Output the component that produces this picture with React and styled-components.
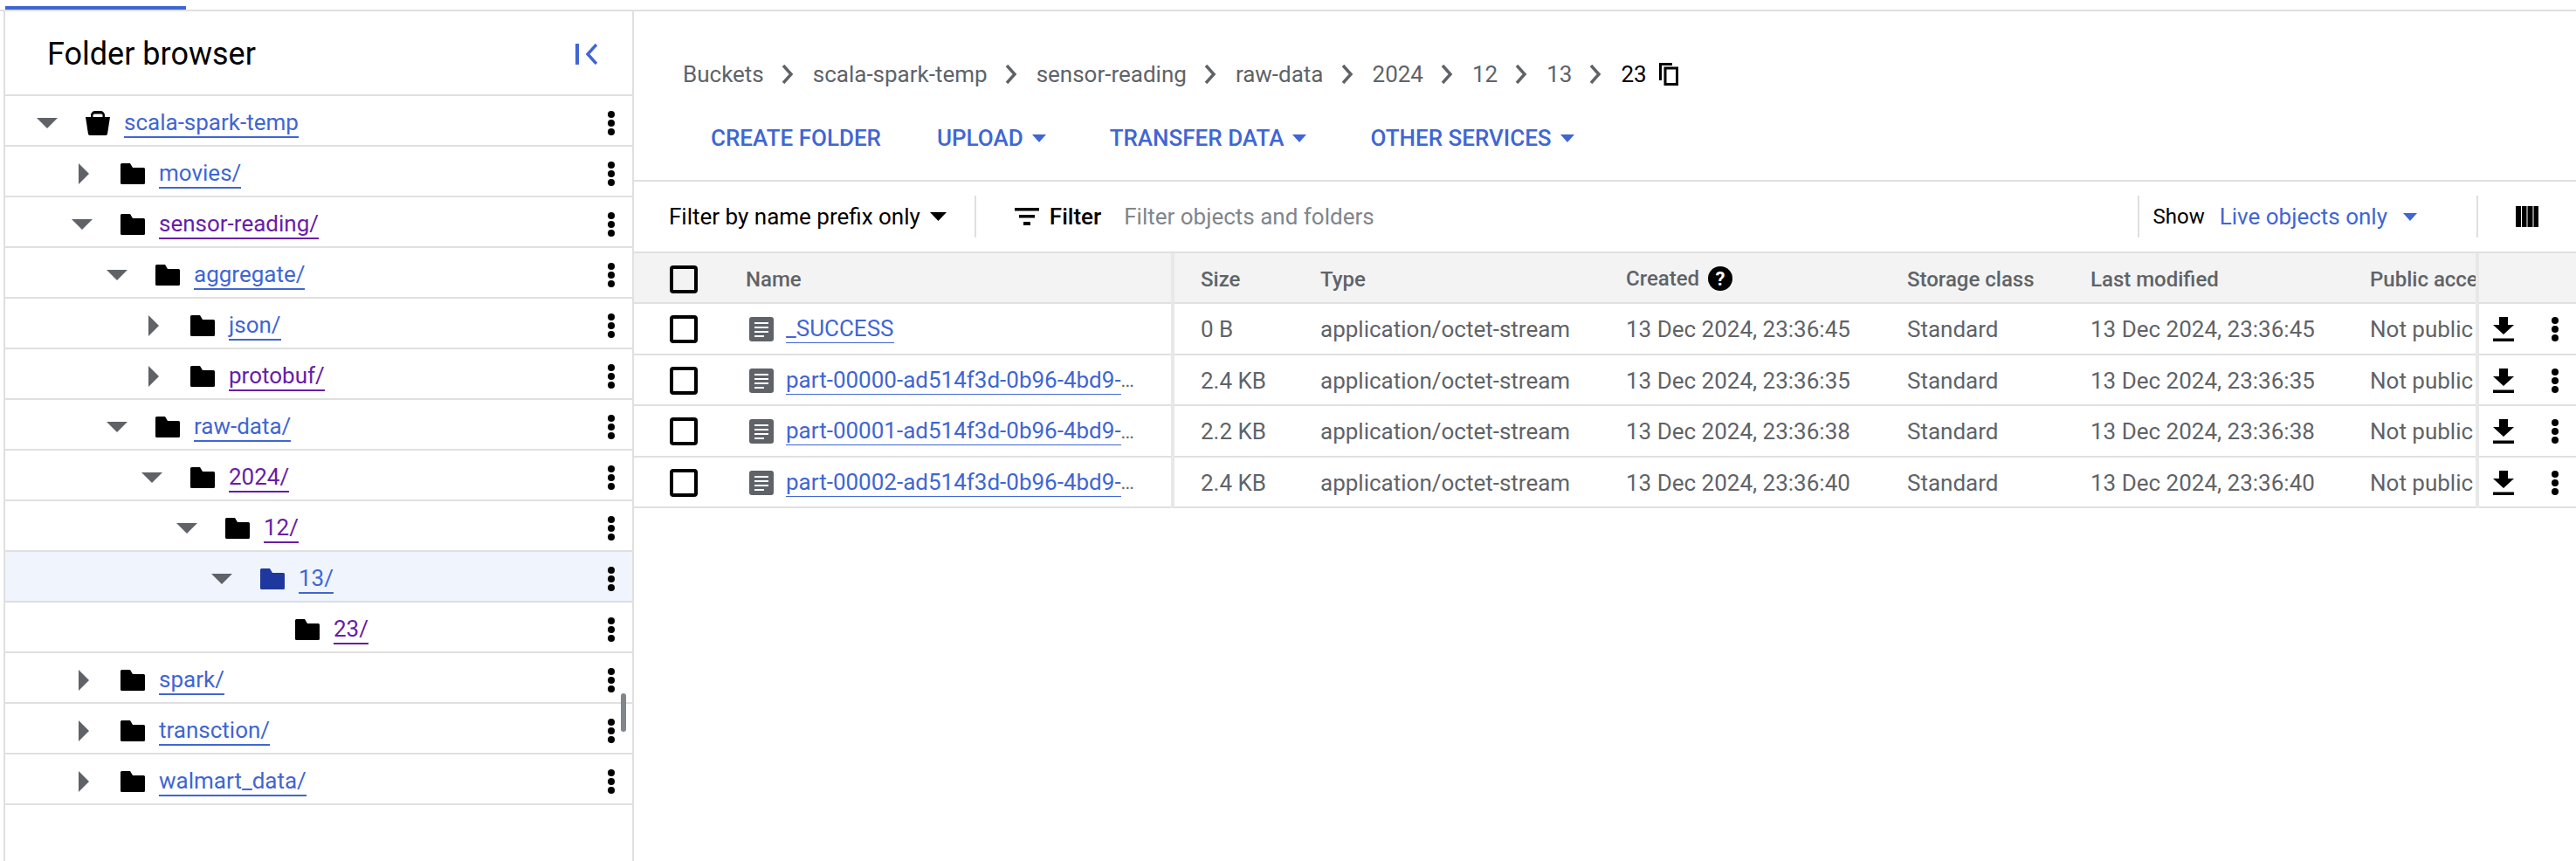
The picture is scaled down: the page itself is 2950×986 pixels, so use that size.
import React from 'react';
import styled, { createGlobalStyle } from 'styled-components';

const blue = '#3f66d4';
const purple = '#681da8';
const grey = '#5f6368';
const line = '#e0e0e0';
const tableColumns = '128px 487px 171px 350px 322px 210px 320px 121px 115px';

const GlobalStyle = createGlobalStyle`
  html, body { margin: 0; padding: 0; background: #fff; }
  body { font-family: Roboto, "Liberation Sans", sans-serif; color: #000; overflow: hidden; }
`;

const Page = styled.div`
  width: 2950px;
  height: 986px;
  display: flex;
  flex-direction: column;
  overflow: hidden;
`;

const TopBar = styled.div`
  height: 11px;
  padding: 7px 0 0 6px;
  box-sizing: border-box;
`;
const Progress = styled.div`
  width: 207px;
  height: 4px;
  background: ${blue};
`;
const TopLine = styled.div`
  height: 2px;
  background: ${line};
`;

const Main = styled.div`
  flex: 1;
  display: flex;
  min-height: 0;
`;

/* sidebar */
const Sidebar = styled.aside`
  position: relative;
  width: 718px;
  margin-left: 4px;
  border-left: 2px solid ${line};
  border-right: 2px solid ${line};
  flex: none;
`;
const SidebarHead = styled.div`
  height: 93px;
  display: flex;
  align-items: center;
  justify-content: space-between;
  padding: 2px 40px 0 48px;
  border-bottom: 2px solid ${line};
`;
const SidebarTitle = styled.h2`
  margin: 0;
  font-size: 36px;
  font-weight: 400;
  color: #000;
`;
const TreeRow = styled.div`
  height: 50px;
  display: flex;
  align-items: center;
  padding: 6px 20px 0 ${p => 30 + p.$level * 40}px;
  border-bottom: 2px solid ${p => (p.$selected ? '#d8dfe8' : line)};
  background: ${p => (p.$selected ? '#f0f4fd' : '#fff')};
`;
const CaretSlot = styled.span`
  width: 62px;
  height: 24px;
  flex: none;
  display: flex;
  align-items: center;
  padding-left: ${p => (p.$open ? '6px' : '14px')};
  box-sizing: border-box;
`;
const TreeLink = styled.a`
  margin-left: 16px;
  font-size: 26px;
  line-height: 31px;
  color: ${p => (p.$visited ? purple : blue)};
  border-bottom: 2px solid currentColor;
`;
const RowEnd = styled.span`
  margin-left: auto;
  display: flex;
`;
const ScrollThumb = styled.div`
  position: absolute;
  left: 705px;
  top: 781px;
  width: 6px;
  height: 44px;
  border-radius: 3px;
  background: #80868b;
`;

/* right pane */
const Content = styled.main`
  flex: 1;
  min-width: 0;
`;
const Breadcrumbs = styled.nav`
  height: 38px;
  margin-top: 53px;
  padding-left: 56px;
  display: flex;
  align-items: center;
  font-size: 26px;
  color: ${grey};
`;
const Crumb = styled.span`
  color: ${p => (p.$current ? '#000' : grey)};
`;
const CrumbChevron = styled.svg`
  width: 14px;
  height: 22px;
  margin: 0 22px 0 20px;
  flex: none;
`;
const CopyIcon = styled.svg`
  width: 22px;
  height: 26px;
  margin-left: 14px;
`;
const Actions = styled.div`
  height: 96px;
  padding: 6px 0 0 88px;
  display: flex;
  align-items: center;
  border-bottom: 2px solid ${line};
`;
const ActionButton = styled.button`
  display: flex;
  align-items: center;
  gap: 10px;
  padding: 0;
  border: 0;
  background: none;
  font: 500 26px Roboto, sans-serif;
  color: ${blue};
  margin-right: ${p => p.$after}px;
`;
const SmallArrow = styled.svg`
  width: 16px;
  height: 9px;
`;
const FilterBar = styled.div`
  height: 80px;
  display: flex;
  align-items: center;
  padding: 0 43px 0 40px;
  border-bottom: 2px solid ${line};
  font-size: 26px;
`;
const FilterMode = styled.span`
  color: #000;
`;
const Divider = styled.span`
  width: 2px;
  height: 48px;
  background: ${line};
  margin: ${p => p.$margin};
  flex: none;
`;
const FilterLabel = styled.span`
  font-weight: 500;
  color: #000;
  margin: 0 26px 0 12px;
`;
const Placeholder = styled.span`
  color: #80868b;
`;
const ShowLabel = styled.span`
  color: #000;
  font-size: 24px;
  margin-right: 17px;
`;
const ShowValue = styled.span`
  color: ${blue};
  margin-right: 18px;
`;

/* table */
const TableRow = styled.div`
  display: grid;
  grid-template-columns: ${tableColumns};
  height: ${p => (p.$head ? '56px' : '56.5px')};
  border-bottom: 2px solid ${line};
  background: ${p => (p.$head ? '#f3f3f3' : '#fff')};
  font-size: ${p => (p.$head ? '24px' : '26px')};
  font-weight: ${p => (p.$head ? 500 : 400)};
  color: ${grey};
`;
const Cell = styled.div`
  margin-bottom: -2px;
  display: flex;
  align-items: center;
  box-sizing: border-box;
  white-space: nowrap;
  overflow: hidden;
  padding-left: ${p => p.$pad || 0}px;
  padding-top: ${p => (p.$nudge ? '2px' : '0')};
  border-left: ${p => (p.$sticky ? '4px solid #e8e8e8' : '0')};
`;
const Checkbox = styled.span`
  width: 32px;
  height: 32px;
  box-sizing: border-box;
  border: 4px solid #000;
  border-radius: 4px;
`;
const FileLink = styled.a`
  margin-left: 14px;
  font-size: 26px;
  line-height: 31px;
  color: ${blue};
  border-bottom: 1px solid currentColor;
`;
const Ellipsis = styled.span`
  color: ${grey};
  font-size: 22px;
  letter-spacing: -1px;
`;
const HelpBadge = styled.span`
  width: 28px;
  height: 28px;
  margin-left: 10px;
  border-radius: 50%;
  background: #000;
  color: #fff;
  font-size: 22px;
  font-weight: 700;
  display: flex;
  align-items: center;
  justify-content: center;
`;
const ActionCell = styled(Cell)`
  gap: 43px;
`;

const CaretDown = () => (
  <svg width="24" height="12" viewBox="0 0 24 12"><path d="M0 0h24L12 12z" fill={grey} /></svg>
);
const CaretRight = () => (
  <svg width="12" height="24" viewBox="0 0 12 24"><path d="M0 0l12 12L0 24z" fill={grey} /></svg>
);
const Folder = ({ color = '#000' }) => (
  <svg width="28" height="24" viewBox="0 0 28 24" style={{ flex: 'none' }}>
    <path d="M1.500 0H11l3 5h12.500A1.500 1.500 0 0 1 28 6.500V22.500A1.500 1.500 0 0 1 26.500 24H1.500A1.500 1.500 0 0 1 0 22.500V1.500A1.500 1.500 0 0 1 1.500 0z" fill={color} />
  </svg>
);
const Bucket = () => (
  <svg width="28" height="28" viewBox="0 0 28 28" style={{ flex: 'none' }}>
    <path fillRule="evenodd" d="M6 7V5a5 5 0 0 1 5-5h6a5 5 0 0 1 5 5v2h6l-3 19.500a2 2 0 0 1-2 1.500H5a2 2 0 0 1-2-1.500L0 7zM8.500 7h11V5a1.500 1.500 0 0 0-1.500-1.500h-8A1.500 1.500 0 0 0 8.500 5z" fill="#000" />
  </svg>
);
const Kebab = () => (
  <svg width="8" height="28" viewBox="0 0 8 28" style={{ flex: 'none' }}>
    <circle cx="4" cy="4" r="4" /><circle cx="4" cy="14" r="4" /><circle cx="4" cy="24" r="4" />
  </svg>
);
const DocIcon = () => (
  <svg width="28" height="28" viewBox="0 0 28 28" style={{ flex: 'none', marginLeft: 4 }}>
    <rect width="28" height="28" rx="3" fill={grey} />
    <path d="M6 7h16M6 12h16M6 17h16M6 22h11" stroke="#fff" strokeWidth="2" />
  </svg>
);
const DownloadIcon = () => (
  <svg width="24" height="28" viewBox="0 0 24 28" style={{ flex: 'none', marginLeft: 16 }}>
    <path d="M7 0h10v9h7L12 20 0 9h7zM0 24.500h24V28H0z" fill="#000" />
  </svg>
);
const ColumnsIcon = () => (
  <svg width="26" height="24" viewBox="0 0 26 24" style={{ flex: 'none' }}>
    <path d="M0 0h6v24H0zM7 0h5.500v24H7zM13.500 0h6v24h-6zM20.500 0H26v24h-5.500z" fill="#000" />
  </svg>
);
const FilterIcon = () => (
  <svg width="28" height="20" viewBox="0 0 28 20" style={{ flex: 'none' }}>
    <path d="M0 0h28v3.500H0zM5 8h18v3.500H5zM10 16h8v4h-8z" fill="#000" />
  </svg>
);
const Collapse = () => (
  <svg width="25" height="24" viewBox="0 0 25 24">
    <path d="M0 0h4v24H0z" fill={blue} />
    <path d="M24 1L14 12l10 11" fill="none" stroke={blue} strokeWidth="3.500" />
  </svg>
);
const Arrow = ({ color = blue }) => (
  <SmallArrow viewBox="0 0 16 9"><path d="M0 0h16L8 9z" fill={color} /></SmallArrow>
);

const tree = [
  { name: 'scala-spark-temp', level: 0, open: true, bucket: true },
  { name: 'movies/', level: 1 },
  { name: 'sensor-reading/', level: 1, open: true, visited: true },
  { name: 'aggregate/', level: 2, open: true },
  { name: 'json/', level: 3 },
  { name: 'protobuf/', level: 3, visited: true },
  { name: 'raw-data/', level: 2, open: true },
  { name: '2024/', level: 3, open: true, visited: true },
  { name: '12/', level: 4, open: true, visited: true },
  { name: '13/', level: 5, open: true, selected: true },
  { name: '23/', level: 6, leaf: true, visited: true },
  { name: 'spark/', level: 1 },
  { name: 'transction/', level: 1 },
  { name: 'walmart_data/', level: 1 },
];

const crumbs = ['Buckets', 'scala-spark-temp', 'sensor-reading', 'raw-data', '2024', '12', '13'];

const files = [
  { name: '_SUCCESS', size: '0 B', time: '13 Dec 2024, 23:36:45' },
  { name: 'part-00000-ad514f3d-0b96-4bd9-', cut: true, size: '2.4 KB', time: '13 Dec 2024, 23:36:35' },
  { name: 'part-00001-ad514f3d-0b96-4bd9-', cut: true, size: '2.2 KB', time: '13 Dec 2024, 23:36:38' },
  { name: 'part-00002-ad514f3d-0b96-4bd9-', cut: true, size: '2.4 KB', time: '13 Dec 2024, 23:36:40' },
];

const App = () => (
  <Page>
    <GlobalStyle />
    <TopBar><Progress /></TopBar>
    <TopLine />
    <Main>
      <Sidebar>
        <SidebarHead>
          <SidebarTitle>Folder browser</SidebarTitle>
          <Collapse />
        </SidebarHead>
        {tree.map(item => (
          <TreeRow key={item.name} $level={item.level} $selected={item.selected}>
            <CaretSlot $open={item.open}>
              {item.leaf ? null : item.open ? <CaretDown /> : <CaretRight />}
            </CaretSlot>
            {item.bucket ? <Bucket /> : <Folder color={item.selected ? '#1f38a0' : '#000'} />}
            <TreeLink $visited={item.visited}>{item.name}</TreeLink>
            <RowEnd><Kebab /></RowEnd>
          </TreeRow>
        ))}
        <ScrollThumb />
      </Sidebar>
      <Content>
        <Breadcrumbs>
          {crumbs.map(c => (
            <React.Fragment key={c}>
              <Crumb>{c}</Crumb>
              <CrumbChevron viewBox="0 0 14 22">
                <path d="M2 1l9 10-9 10" fill="none" stroke={grey} strokeWidth="3.500" />
              </CrumbChevron>
            </React.Fragment>
          ))}
          <Crumb $current>23</Crumb>
          <CopyIcon viewBox="0 0 22 26">
            <path d="M1.500 20V1.500H15M7 6h13.500v18.500H7z" fill="none" stroke="#000" strokeWidth="3" />
          </CopyIcon>
        </Breadcrumbs>
        <Actions>
          <ActionButton $after={64}>CREATE FOLDER</ActionButton>
          <ActionButton $after={73}>UPLOAD<Arrow /></ActionButton>
          <ActionButton $after={73}>TRANSFER DATA<Arrow /></ActionButton>
          <ActionButton $after={0}>OTHER SERVICES<Arrow /></ActionButton>
        </Actions>
        <FilterBar>
          <FilterMode>Filter by name prefix only</FilterMode>
          <svg width="19" height="10" viewBox="0 0 19 10" style={{ marginLeft: 11 }}><path d="M0 0h19L9.500 10z" /></svg>
          <Divider $margin="0 44px 0 32px" />
          <FilterIcon />
          <FilterLabel>Filter</FilterLabel>
          <Placeholder>Filter objects and folders</Placeholder>
          <Divider $margin="0 16px 0 auto" />
          <ShowLabel>Show</ShowLabel>
          <ShowValue>Live objects only</ShowValue>
          <Arrow />
          <Divider $margin="0 43px 0 68px" />
          <ColumnsIcon />
        </FilterBar>
        <TableRow $head>
          <Cell $pad={41} $nudge><Checkbox /></Cell>
          <Cell $nudge>Name</Cell>
          <Cell $sticky $pad={30} $nudge>Size</Cell>
          <Cell $nudge>Type</Cell>
          <Cell>Created<HelpBadge>?</HelpBadge></Cell>
          <Cell $nudge>Storage class</Cell>
          <Cell $nudge>Last modified</Cell>
          <Cell $nudge>Public access</Cell>
          <Cell $sticky />
        </TableRow>
        {files.map(f => (
          <TableRow key={f.name}>
            <Cell $pad={41}><Checkbox /></Cell>
            <Cell>
              <DocIcon />
              <FileLink>{f.name}</FileLink>
              {f.cut && <Ellipsis>...</Ellipsis>}
            </Cell>
            <Cell $sticky $pad={30}>{f.size}</Cell>
            <Cell>application/octet-stream</Cell>
            <Cell>{f.time}</Cell>
            <Cell>Standard</Cell>
            <Cell>{f.time}</Cell>
            <Cell>Not public</Cell>
            <ActionCell $sticky>
              <DownloadIcon />
              <Kebab />
            </ActionCell>
          </TableRow>
        ))}
      </Content>
    </Main>
  </Page>
);

export default App;
